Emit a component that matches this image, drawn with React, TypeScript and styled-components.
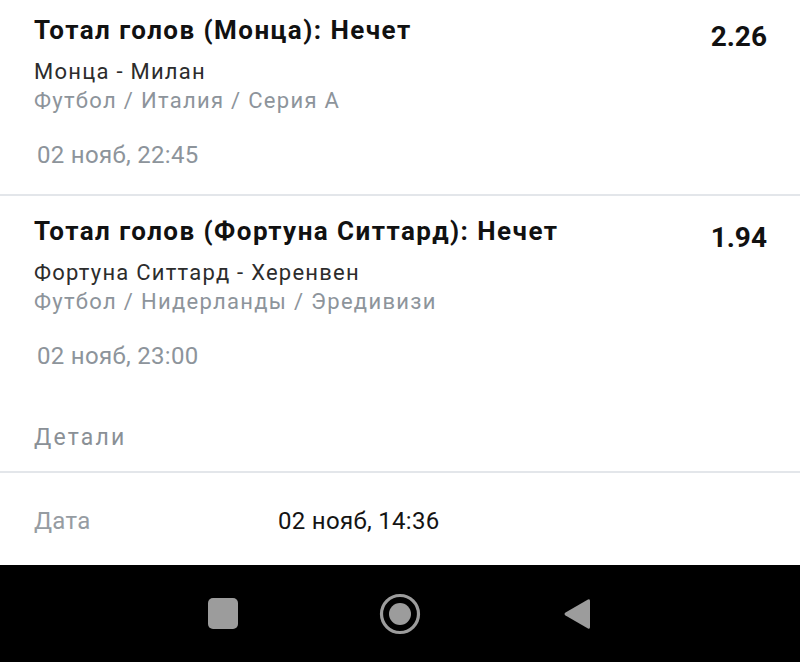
import React from "react";
import styled, { createGlobalStyle } from "styled-components";

const GlobalStyle = createGlobalStyle`
  html, body { margin: 0; padding: 0; background: #ffffff; }
  body { font-family: Roboto, "Noto Sans", Arial, sans-serif; -webkit-font-smoothing: antialiased; }
  * { box-sizing: border-box; }
`;

const Screen = styled.div`
  width: 800px;
  height: 662px;
  display: flex;
  flex-direction: column;
  overflow: hidden;
  background: #ffffff;
`;

const Content = styled.div`
  flex: 1;
  display: flex;
  flex-direction: column;
  overflow: hidden;
`;

const List = styled.div`
  display: flex;
  flex-direction: column;
  margin-top: -5px;
`;

const Card = styled.div<{ $divider?: boolean }>`
  display: flex;
  flex-direction: column;
  padding: 20px 33px 25px 34px;
  border-bottom: 2px solid ${(p) => (p.$divider ? "#e3e6ea" : "transparent")};
`;

const TopRow = styled.div`
  display: flex;
  align-items: flex-start;
  justify-content: space-between;
`;

const Title = styled.div`
  font-size: 26px;
  line-height: 30px;
  font-weight: 700;
  letter-spacing: 1.45px;
  color: #111111;
  white-space: nowrap;
`;

const Odds = styled.div`
  margin-top: 7px;
  margin-bottom: -7px;
  font-size: 28px;
  line-height: 30px;
  font-weight: 700;
  color: #111111;
`;

const Teams = styled.div`
  margin-top: 12px;
  font-size: 22px;
  line-height: 29px;
  letter-spacing: 1.25px;
  color: #2c2c2c;
`;

const Category = styled.div`
  font-size: 22px;
  line-height: 29px;
  letter-spacing: 1.3px;
  color: #8d949b;
`;

const EventDate = styled.div`
  margin-top: 26px;
  padding-left: 3px;
  font-size: 24px;
  line-height: 28px;
  letter-spacing: 0.3px;
  color: #8d949b;
`;

const SectionHeader = styled.div`
  padding: 27px 34px 19px;
  font-size: 23px;
  line-height: 28px;
  letter-spacing: 2.2px;
  color: #8a9096;
  border-bottom: 2px solid #e3e6ea;
`;

const InfoRow = styled.div`
  display: grid;
  grid-template-columns: 244px 1fr;
  padding: 34px 34px 0;
  font-size: 24px;
  line-height: 28px;
  letter-spacing: 0.3px;
`;

const InfoLabel = styled.div`
  color: #969ca2;
`;

const InfoValue = styled.div`
  color: #141414;
`;

const NavBar = styled.div`
  height: 97px;
  background: #000000;
  display: flex;
  justify-content: center;
  align-items: center;
`;

const NavCell = styled.div`
  width: 177px;
  display: flex;
  justify-content: center;
  align-items: center;
`;

const SquareIcon = styled.div`
  width: 30px;
  height: 31px;
  border-radius: 5px;
  background: #9c9c9c;
`;

type Bet = {
  title: string;
  odds: string;
  teams: string;
  category: string;
  date: string;
};

const bets: Bet[] = [
  {
    title: "Тотал голов (Монца): Нечет",
    odds: "2.26",
    teams: "Монца - Милан",
    category: "Футбол / Италия / Серия А",
    date: "02 нояб, 22:45",
  },
  {
    title: "Тотал голов (Фортуна Ситтард): Нечет",
    odds: "1.94",
    teams: "Фортуна Ситтард - Херенвен",
    category: "Футбол / Нидерланды / Эредивизи",
    date: "02 нояб, 23:00",
  },
];

export default function App() {
  return (
    <Screen>
      <GlobalStyle />
      <Content>
        <List>
          {bets.map((b, i) => (
            <Card key={i} $divider={i < bets.length - 1}>
              <TopRow>
                <Title>{b.title}</Title>
                <Odds>{b.odds}</Odds>
              </TopRow>
              <Teams>{b.teams}</Teams>
              <Category>{b.category}</Category>
              <EventDate>{b.date}</EventDate>
            </Card>
          ))}
        </List>
        <SectionHeader>Детали</SectionHeader>
        <InfoRow>
          <InfoLabel>Дата</InfoLabel>
          <InfoValue>02 нояб, 14:36</InfoValue>
        </InfoRow>
      </Content>
      <NavBar>
        <NavCell>
          <SquareIcon />
        </NavCell>
        <NavCell>
          <svg width="42" height="42" viewBox="0 0 42 42">
            <circle cx="21" cy="21" r="18.5" fill="none" stroke="#9c9c9c" strokeWidth="3.2" />
            <circle cx="21" cy="21" r="11" fill="#9c9c9c" />
          </svg>
        </NavCell>
        <NavCell>
          <svg width="30" height="36" viewBox="0 0 30 36">
            <path
              d="M26 3.5 Q28 2.5 28 5 L28 31 Q28 33.5 26 32.5 L3.5 19.5 Q1.5 18 3.5 16.5 Z"
              fill="#9c9c9c"
            />
          </svg>
        </NavCell>
      </NavBar>
    </Screen>
  );
}
